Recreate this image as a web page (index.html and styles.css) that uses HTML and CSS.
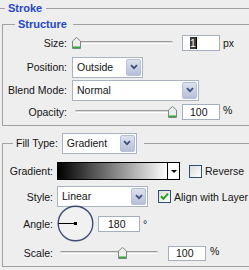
FILE: index.html
```html
<!DOCTYPE html>
<html>
<head>
<meta charset="utf-8">
<link rel="stylesheet" href="styles.css">
</head>
<body>
<div class="panel">
  <div class="hdr"><span class="line dash"></span><span class="title">Stroke</span><span class="line rule"></span></div>

  <fieldset class="grp structure">
    <legend class="title">Structure</legend>

    <div class="row r-size">
      <span class="lbl">Size:</span>
      <div class="slider">
        <div class="track"></div>
        <svg class="thumb" style="left:0px" width="9" height="12" viewBox="0 0 9 12"><path d="M0.5 4 L4.5 0.5 L8.5 4 V11.5 H0.5 Z" fill="#eceeec" stroke="#7d8a82"/><rect x="1" y="9.5" width="7" height="1.6" fill="#3aa53a"/></svg>
      </div>
      <div class="num"><span class="sel">1</span></div>
      <span class="unit">px</span>
    </div>

    <div class="row r-pos">
      <span class="lbl">Position:</span>
      <div class="select w-pos"><span class="val">Outside</span><span class="btn"><svg width="8" height="6" viewBox="0 0 8 6"><path d="M1 1.2 L4 4.2 L7 1.2" fill="none" stroke="#3e4f78" stroke-width="1.8"/></svg></span></div>
    </div>

    <div class="row r-blend">
      <span class="lbl">Blend Mode:</span>
      <div class="select w-blend"><span class="val">Normal</span><span class="btn"><svg width="8" height="6" viewBox="0 0 8 6"><path d="M1 1.2 L4 4.2 L7 1.2" fill="none" stroke="#3e4f78" stroke-width="1.8"/></svg></span></div>
    </div>

    <div class="row r-op">
      <span class="lbl">Opacity:</span>
      <div class="slider">
        <div class="track"></div>
        <svg class="thumb" style="left:96px" width="9" height="12" viewBox="0 0 9 12"><path d="M0.5 4 L4.5 0.5 L8.5 4 V11.5 H0.5 Z" fill="#eceeec" stroke="#7d8a82"/><rect x="1" y="9.5" width="7" height="1.6" fill="#3aa53a"/></svg>
      </div>
      <div class="num">100</div>
      <span class="unit sup">%</span>
    </div>
  </fieldset>

  <fieldset class="grp fill">
    <legend class="fill-legend">
      <span class="ft-lbl">Fill Type:</span>
      <div class="select w-fill"><span class="val">Gradient</span><span class="btn"><svg width="8" height="6" viewBox="0 0 8 6"><path d="M1 1.2 L4 4.2 L7 1.2" fill="none" stroke="#3e4f78" stroke-width="1.8"/></svg></span></div>
    </legend>

    <div class="row r-grad">
      <span class="lbl">Gradient:</span>
      <div class="grad"><span class="ramp"></span><span class="arr"><span class="tri"></span></span></div>
      <span class="cb cb-rev"></span>
      <span class="cb-text">Reverse</span>
    </div>

    <div class="row r-style">
      <span class="lbl">Style:</span>
      <div class="select w-style"><span class="val">Linear</span><span class="btn"><svg width="8" height="6" viewBox="0 0 8 6"><path d="M1 1.2 L4 4.2 L7 1.2" fill="none" stroke="#3e4f78" stroke-width="1.8"/></svg></span></div>
      <span class="cb cb-align"><svg width="11" height="11" viewBox="0 0 11 11"><path d="M2 5.2 L4.4 7.8 L9 2.6" fill="none" stroke="#22a122" stroke-width="2"/></svg></span>
      <span class="cb-text">Align with Layer</span>
    </div>

    <div class="row r-angle">
      <span class="lbl">Angle:</span>
      <svg class="dial" width="37" height="37" viewBox="0 0 37 37"><circle cx="18.5" cy="18.5" r="17.3" fill="#f1f1f1" stroke="#414c73" stroke-width="1.4"/><line x1="1.5" y1="18.5" x2="18.5" y2="18.5" stroke="#000" stroke-width="1"/><rect x="17" y="17" width="3" height="3" fill="#000"/></svg>
      <div class="num num-angle">180</div>
      <span class="unit deg">°</span>
    </div>

    <div class="row r-scale">
      <span class="lbl">Scale:</span>
      <div class="slider">
        <div class="track"></div>
        <svg class="thumb" style="left:61px" width="9" height="12" viewBox="0 0 9 12"><path d="M0.5 4 L4.5 0.5 L8.5 4 V11.5 H0.5 Z" fill="#eceeec" stroke="#7d8a82"/><rect x="1" y="9.5" width="7" height="1.6" fill="#3aa53a"/></svg>
      </div>
      <div class="num num-scale">100</div>
      <span class="unit sup pct">%</span>
    </div>
  </fieldset>
</div>
</body>
</html>
```

FILE: styles.css
```css
html, body {
  margin: 0;
  overflow: hidden;
}
body {
  background: #eeeeee;
  font-family: "Liberation Sans", Arial, sans-serif;
  font-size: 10.5px;
  color: #141414;
  width: 249px;
  height: 270px;
}
.panel {
  width: 249px;
}
.hdr {
  display: flex;
  align-items: center;
  height: 16px;
}
.line {
  border-top: 1px solid #a2a2a2;
  height: 0;
}
.hdr .dash {
  width: 5px;
}
.hdr .title {
  margin-left: 3px;
}
.hdr .rule {
  flex: 1;
  margin-left: 4px;
}
.title {
  color: #2548c8;
  font-weight: bold;
  font-size: 11px;
  line-height: 14px;
}
fieldset.grp {
  margin: 1px 0 0 2px;
  padding: 0 0 2px 0;
  border: 1px solid #a2a2a2;
  border-right: none;
  min-width: 0;
}
.structure legend {
  margin-left: 12px;
  padding: 0 6px 0 3px;
}
.row {
  display: flex;
  align-items: center;
}
.lbl {
  flex: none;
  text-align: right;
}
.structure .lbl {
  width: 64px;
  margin-right: 5px;
}
.fill .lbl {
  width: 50px;
  margin-right: 4px;
}
.r-size { height: 22px; margin-top: 1px; }
.r-pos { height: 22px; margin-top: 2px; }
.r-blend { height: 22px; margin-top: 1px; }
.r-op { height: 22px; margin-top: 0; }

.slider {
  position: relative;
  flex: none;
  width: 106px;
  height: 14px;
}
.track {
  position: absolute;
  left: 3px;
  right: 5px;
  top: 5px;
  height: 3px;
  border-radius: 2px;
  background: linear-gradient(#9d9d9d 0 1px, #dadada 1px 2px, #ffffff 2px);
}
.thumb {
  position: absolute;
  top: 1px;
}
.num {
  flex: none;
  box-sizing: border-box;
  width: 38px;
  height: 16px;
  border: 1px solid #a5afbd;
  background: #fff;
  padding-left: 7px;
  line-height: 14px;
  margin-left: 4px;
}
.sel {
  background: #3a3a3a;
  color: #fff;
  padding: 0;
  border-right: 1px solid #000;
}
.unit {
  margin-left: 3px;
}
.sup {
  align-self: flex-start;
  margin-top: 3px;
}
.select {
  flex: none;
  display: flex;
  box-sizing: border-box;
  height: 21px;
  border: 1px solid #a9b3c3;
  background: #fff;
}
.select .val {
  flex: 1;
  padding-left: 4px;
  line-height: 19px;
}
.select .btn {
  box-sizing: border-box;
  width: 15px;
  margin: 1px;
  border: 1px solid #b8c0d8;
  border-radius: 2px;
  background: linear-gradient(#dde1ef, #b7bed8);
  display: flex;
  align-items: center;
  justify-content: center;
}
.w-pos { width: 71px; }
.w-blend { width: 127px; }
.w-fill { width: 75px; }
.w-style { width: 91px; }

.fill {
  margin-top: 6px !important;
  padding-bottom: 5px !important;
}
.fill-legend {
  display: flex;
  align-items: center;
  height: 22px;
  margin-left: 10px;
  padding: 0 7px 0 3px;
}
.ft-lbl {
  margin-right: 4px;
}
.r-grad { height: 18px; margin-top: 8px; }
.r-style { height: 21px; margin-top: 6px; }
.r-angle { height: 37px; margin-top: -2px; }
.r-scale { height: 16px; margin-top: 3px; }

.grad {
  flex: none;
  display: flex;
  box-sizing: border-box;
  width: 123px;
  height: 18px;
  border: 1px solid #000;
  background: #fff;
}
.grad .ramp {
  flex: 1;
  background: linear-gradient(90deg, #000000, #ffffff);
}
.grad .arr {
  width: 11px;
  border-left: 1px solid #000;
  display: flex;
  align-items: center;
  justify-content: center;
}
.tri {
  width: 0;
  height: 0;
  border-left: 3px solid transparent;
  border-right: 3px solid transparent;
  border-top: 3px solid #000;
}
.cb {
  flex: none;
  box-sizing: border-box;
  width: 13px;
  height: 13px;
  border: 1px solid #2f4f78;
  background: linear-gradient(135deg, #dcdcd7, #ffffff);
  display: flex;
  align-items: center;
  justify-content: center;
}
.cb-rev { margin-left: 9px; }
.cb-align { margin-left: 10px; }
.cb-text { margin-left: 3px; white-space: nowrap; }
.dial {
  flex: none;
}
.num-angle {
  width: 42px;
  margin-left: 4px;
  padding-left: 9px;
}
.deg {
  align-self: flex-start;
  margin-top: 13px;
}
.num-scale {
  margin-left: 5px;
  height: 15px;
  line-height: 13px;
}
.pct {
  margin-top: 0;
  margin-left: 4px;
}
```
